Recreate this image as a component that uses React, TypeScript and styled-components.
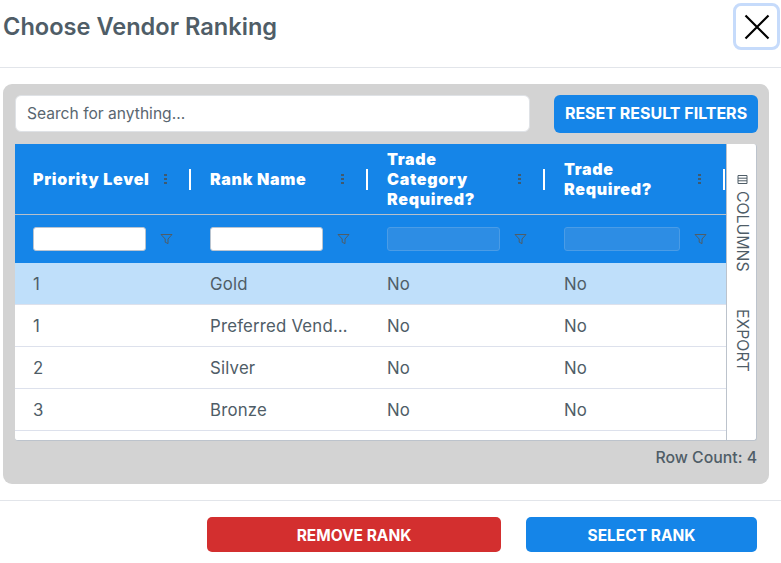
import React from "react"
import styled, { createGlobalStyle } from "styled-components"

const GlobalStyle = createGlobalStyle`
  html, body {
    margin: 0;
    padding: 0;
    background: #fff;
  }
  * {
    box-sizing: border-box;
  }
  body {
    font-family: Inter, "Noto Sans", "Liberation Sans", sans-serif;
    color: #4f5d67;
  }
`

const COLUMNS = "177px 177px 177px 180px"

interface Column {
  label: string[]
  filterEnabled: boolean
  inputWidth: number
}

const columns: Column[] = [
  { label: ["Priority Level"], filterEnabled: true, inputWidth: 113 },
  { label: ["Rank Name"], filterEnabled: true, inputWidth: 113 },
  { label: ["Trade", "Category", "Required?"], filterEnabled: false, inputWidth: 113 },
  { label: ["Trade", "Required?"], filterEnabled: false, inputWidth: 116 },
]

const rows = [
  { level: "1", name: "Gold", category: "No", trade: "No", selected: true },
  { level: "1", name: "Preferred Vendors", category: "No", trade: "No", selected: false },
  { level: "2", name: "Silver", category: "No", trade: "No", selected: false },
  { level: "3", name: "Bronze", category: "No", trade: "No", selected: false },
]

const FilterIcon = () => (
  <svg width="13" height="12" viewBox="0 0 13 12" fill="none">
    <path d="M1 1.5h11L8 6v4.6L5.2 9.2V6z" stroke="#4f5d67" strokeWidth="1" strokeLinejoin="round" />
  </svg>
)

const CloseIcon = () => (
  <svg width="26" height="26" viewBox="0 0 26 26" fill="none">
    <path d="M1.5 1.5l23 23M24.5 1.5l-23 23" stroke="#000" strokeWidth="2.2" />
  </svg>
)

const ColumnsIcon = () => (
  <svg width="11" height="11" viewBox="0 0 11 11" fill="none">
    <path d="M1 1.5h9v8H1zM1 4.2h9M1 6.8h9" stroke="#4f5d67" strokeWidth="1" />
  </svg>
)

export default function App() {
  return (
    <Dialog>
      <GlobalStyle />
      <Header>
        <Title>Choose Vendor Ranking</Title>
        <CloseButton aria-label="Close">
          <CloseIcon />
        </CloseButton>
      </Header>
      <Panel>
        <Toolbar>
          <Search placeholder="Search for anything..." />
          <ResetButton>RESET RESULT FILTERS</ResetButton>
        </Toolbar>
        <Grid>
          <GridMain>
            <HeaderRow>
              {columns.map((col) => (
                <HeaderCell key={col.label.join(" ")}>
                  <HeaderLabel>
                    {col.label.map((line) => (
                      <div key={line}>{line}</div>
                    ))}
                  </HeaderLabel>
                  <Kebab>
                    <i />
                    <i />
                    <i />
                  </Kebab>
                  <Separator />
                </HeaderCell>
              ))}
            </HeaderRow>
            <FilterRow>
              {columns.map((col) => (
                <FilterCell key={col.label.join(" ")}>
                  <FilterInput $enabled={col.filterEnabled} $width={col.inputWidth} />
                  <FilterIconSlot>
                    <FilterIcon />
                  </FilterIconSlot>
                </FilterCell>
              ))}
            </FilterRow>
            {rows.map((row) => (
              <BodyRow key={row.name} $selected={row.selected}>
                <BodyCell>{row.level}</BodyCell>
                <BodyCell>{row.name}</BodyCell>
                <BodyCell>{row.category}</BodyCell>
                <BodyCell>{row.trade}</BodyCell>
              </BodyRow>
            ))}
          </GridMain>
          <SideBar>
            <SideTab>
              <ColumnsIcon />
              <span>COLUMNS</span>
            </SideTab>
            <SideTab>
              <span>EXPORT</span>
            </SideTab>
          </SideBar>
        </Grid>
        <RowCount>Row Count: 4</RowCount>
      </Panel>
      <Footer>
        <RemoveButton>REMOVE RANK</RemoveButton>
        <SelectButton>SELECT RANK</SelectButton>
      </Footer>
    </Dialog>
  )
}

const Dialog = styled.div`
  width: 781px;
  height: 563px;
  overflow: hidden;
  background: #fff;
`

const Header = styled.header`
  height: 68px;
  padding: 3px 0 0 3px;
  display: flex;
  justify-content: space-between;
  align-items: flex-start;
  border-bottom: 1px solid #e2e5ea;
`

const Title = styled.h1`
  margin: 7px 0 0;
  font-size: 23.6px;
  line-height: 34px;
  font-weight: 600;
  color: #4f5d67;
`

const CloseButton = styled.button`
  width: 47px;
  height: 47px;
  padding: 0;
  margin-right: 1px;
  display: flex;
  align-items: center;
  justify-content: center;
  background: #fff;
  border: 3px solid #c6dbfb;
  border-radius: 8px;
`

const Panel = styled.section`
  width: 766px;
  height: 400px;
  margin: 16px 0 0 3px;
  padding: 11px 12px 0;
  background: #d3d3d3;
  border-radius: 9px;
`

const Toolbar = styled.div`
  display: flex;
  align-items: flex-start;
  justify-content: space-between;
  height: 38px;
  margin-right: -1px;
`

const Search = styled.input`
  width: 515px;
  height: 37px;
  padding: 0 11px;
  font: 400 15.6px Inter, "Noto Sans", sans-serif;
  color: #4f5d67;
  background: #fff;
  border: 1px solid #dfe2e6;
  border-radius: 6px;
  outline: none;

  &::placeholder {
    color: #5a6670;
    opacity: 1;
  }
`

const BaseButton = styled.button`
  border: none;
  color: #fff;
  font-family: Inter, "Noto Sans", sans-serif;
  font-weight: 700;
  font-size: 15.5px;
  padding: 0;
`

const ResetButton = styled(BaseButton)`
  width: 204px;
  height: 38px;
  padding-bottom: 3px;
  font-size: 16px;
  background: #1585e8;
  border-radius: 6px;
`

const Grid = styled.div`
  display: flex;
  width: 742px;
  height: 297px;
  margin-top: 11px;
  background: #fff;
  border: 1px solid #bcc3cc;
  border-top: none;
  border-left: none;
  border-radius: 0 3px 3px 3px;
  overflow: hidden;
`

const GridMain = styled.div`
  width: 711px;
  flex: none;
`

const HeaderRow = styled.div`
  display: grid;
  grid-template-columns: ${COLUMNS};
  height: 71px;
  background: #1585e8;
  border-bottom: 1px solid #b7c0ca;
`

const HeaderCell = styled.div`
  display: flex;
  align-items: center;
  padding-left: 18px;
  color: #fff;
`

const HeaderLabel = styled.div`
  flex: 1;
  padding-bottom: 1px;
  font-size: 16px;
  line-height: 20px;
  font-weight: 900;
  letter-spacing: 0.7px;
  white-space: nowrap;
`

const Kebab = styled.span`
  width: 3px;
  margin-right: 22px;
  display: flex;
  flex-direction: column;
  gap: 2px;

  i {
    display: block;
    width: 3px;
    height: 2px;
    background: #3f5a70;
  }
`

const Separator = styled.span`
  width: 2px;
  height: 21px;
  margin-right: 1px;
  background: #fff;
`

const FilterRow = styled.div`
  display: grid;
  grid-template-columns: ${COLUMNS};
  height: 48px;
  background: #1585e8;
`

const FilterCell = styled.div`
  display: flex;
  align-items: center;
  padding-left: 18px;
`

const FilterInput = styled.div<{ $enabled: boolean; $width: number }>`
  width: ${(p) => p.$width}px;
  height: 24px;
  border-radius: 3px;
  background: ${(p) => (p.$enabled ? "#fff" : "#2d8de4")};
  border: 1px solid ${(p) => (p.$enabled ? "#b9c4d0" : "#4a9ce6")};
`

const FilterIconSlot = styled.span`
  margin-left: 14px;
  display: flex;
`

const BodyRow = styled.div<{ $selected: boolean }>`
  display: grid;
  grid-template-columns: ${COLUMNS};
  height: 42px;
  align-items: center;
  background: ${(p) => (p.$selected ? "#bfdffa" : "#fff")};
  border-bottom: 1px solid #dde1ec;
`

const BodyCell = styled.div`
  padding: 1px 18px 0 18px;
  font-size: 16.8px;
  letter-spacing: 0.2px;
  color: #4f5d67;
  white-space: nowrap;
  overflow: hidden;
  text-overflow: ellipsis;
`

const SideBar = styled.aside`
  flex: 1;
  display: flex;
  flex-direction: column;
  align-items: center;
  padding: 30px 0 0 1px;
  gap: 37px;
  border-left: 1px solid #bcc3cc;
`

const SideTab = styled.div`
  display: flex;
  flex-direction: column;
  align-items: center;
  gap: 6px;
  font-size: 15.8px;
  color: #4f5d67;

  span {
    writing-mode: vertical-rl;
  }
`

const RowCount = styled.div`
  margin-top: 8px;
  width: 742px;
  text-align: right;
  font-size: 15.8px;
  line-height: 18px;
  font-weight: 500;
  color: #4f5d67;
`

const Footer = styled.footer`
  margin-top: 16px;
  border-top: 1px solid #e2e5ea;
  padding: 16px 24px 0 0;
  display: flex;
  justify-content: flex-end;
  gap: 25px;
`

const RemoveButton = styled(BaseButton)`
  width: 294px;
  height: 35px;
  padding-top: 1px;
  background: #d32f2f;
  border-radius: 5px;
`

const SelectButton = styled(BaseButton)`
  width: 231px;
  height: 35px;
  padding-top: 1px;
  background: #1585e8;
  border-radius: 5px;
`
